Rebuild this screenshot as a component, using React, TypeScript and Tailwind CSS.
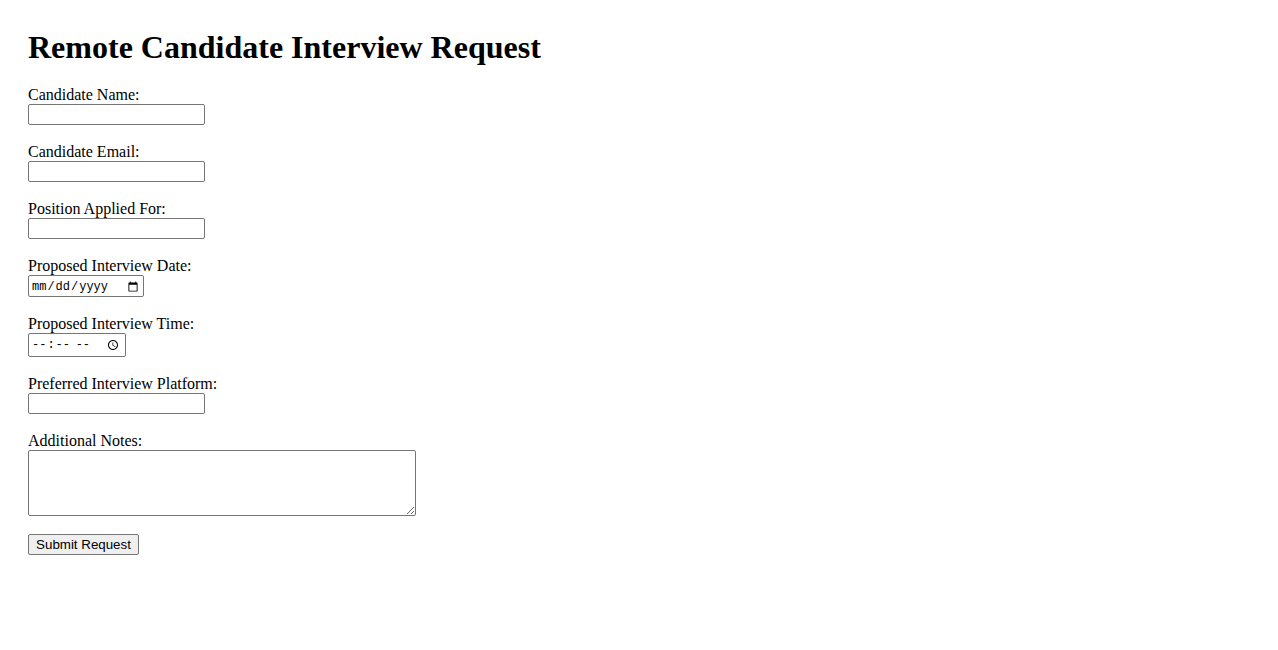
export default function App() {
  const fields = [
    { label: "Candidate Name:", type: "text", w: "w-[177px] h-[21px]" },
    { label: "Candidate Email:", type: "email", w: "w-[177px] h-[21px]" },
    { label: "Position Applied For:", type: "text", w: "w-[177px] h-[21px]" },
  ];

  const inputBase =
    "block border border-[#767676] rounded-[2px] bg-white px-[2px] text-[13.333px] text-black outline-none";

  return (
    <div
      className="min-h-screen bg-white px-[28px] pt-[29px] text-black"
      style={{ fontFamily: '"Liberation Serif", "Times New Roman", serif' }}
    >
      <h1 className="mb-[20px] text-[32px] font-bold leading-[37px]">
        Remote Candidate Interview Request
      </h1>

      <form onSubmit={(e) => e.preventDefault()} className="text-[16px] leading-[18px]">
        {fields.map((f) => (
          <div key={f.label} className="mb-[18px]">
            <label className="block">{f.label}</label>
            <input type={f.type} className={`${inputBase} ${f.w}`} style={{ fontFamily: '"Liberation Sans", Arial, sans-serif' }} />
          </div>
        ))}

        <div className="mb-[18px]">
          <label className="block">Proposed Interview Date:</label>
          <input
            type="date"
            className={`${inputBase} w-[116px] h-[22px] px-[1px] pt-[2px]`}
            style={{ fontFamily: '"Liberation Mono", "Courier New", monospace', fontSize: "12px" }}
          />
        </div>

        <div className="mb-[18px]">
          <label className="block">Proposed Interview Time:</label>
          <input
            type="time"
            className={`${inputBase} w-[98px] h-[24px] px-[1px]`}
            style={{ fontFamily: '"Liberation Mono", "Courier New", monospace', fontSize: "12px" }}
          />
        </div>

        <div className="mb-[18px]">
          <label className="block">Preferred Interview Platform:</label>
          <input type="text" className={`${inputBase} w-[177px] h-[21px]`} style={{ fontFamily: '"Liberation Sans", Arial, sans-serif' }} />
        </div>

        <div className="mb-[18px]">
          <label className="block">Additional Notes:</label>
          <textarea
            className={`${inputBase} w-[388px] h-[66px] resize`}
            style={{ fontFamily: '"Liberation Mono", monospace' }}
          />
        </div>

        <button
          type="submit"
          className="block h-[21px] w-[111px] rounded-[2px] border border-[#767676] bg-[#efefef] px-[6px] text-[13.333px] leading-[19px] text-black"
          style={{ fontFamily: '"Liberation Sans", Arial, sans-serif' }}
        >
          Submit Request
        </button>
      </form>
    </div>
  );
}
